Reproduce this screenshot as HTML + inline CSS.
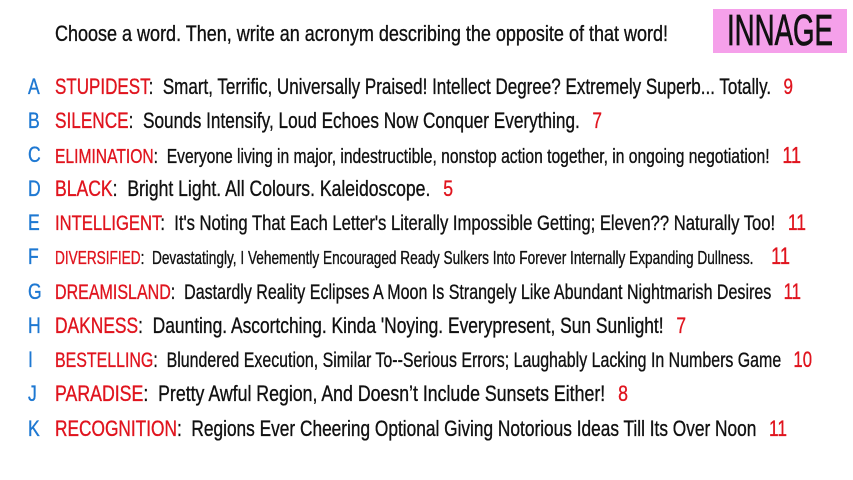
<!DOCTYPE html>
<html><head><meta charset="utf-8">
<style>
html,body{margin:0;padding:0;background:#fff;}
body{width:853px;height:480px;position:relative;overflow:hidden;font-family:"Liberation Sans Narrow","Liberation Sans",sans-serif;color:#111;-webkit-text-stroke:0.35px currentColor;}
.hdr{position:absolute;left:55px;top:21px;font-size:22px;white-space:nowrap;transform-origin:0 50%;}
.box{position:absolute;left:713px;top:9px;width:134px;height:44px;background:#f5a0ea;}
.box span{position:absolute;left:14px;top:0;font-size:44px;line-height:44px;color:#111;white-space:nowrap;transform-origin:0 50%;-webkit-text-stroke:0.8px #111;}
.row{position:absolute;left:0;height:26px;width:853px;}
.L{position:absolute;left:28px;top:0;color:#1e78d2;font-size:22px;line-height:26px;transform:scaleX(0.8);transform-origin:0 50%;}
.c{position:absolute;left:55px;top:0;line-height:26px;white-space:nowrap;transform-origin:0 50%;}
.w{color:#e0141e;}
.n{color:#e0141e;margin-left:10px;}
</style></head><body>
<div class="hdr" data-e="668">Choose a word. Then, write an acronym describing the opposite of that word!</div>
<div class="box"><span data-e="120">INNAGE</span></div>

<div class="row" style="top:74px"><span class="L">A</span><span class="c" data-e="793" style="font-size:22px"><span class="w">STUPIDEST</span>:&nbsp; Smart, Terrific, Universally Praised! Intellect Degree? Extremely Superb... Totally.<span class="n">&nbsp;9</span></span></div>
<div class="row" style="top:108px"><span class="L">B</span><span class="c" data-e="602" style="font-size:22px"><span class="w">SILENCE</span>:&nbsp; Sounds Intensify, Loud Echoes Now Conquer Everything.<span class="n">&nbsp;7</span></span></div>
<div class="row" style="top:142px"><span class="L">C</span><span class="c" data-e="801" style="font-size:20px"><span class="w">ELIMINATION</span>:&nbsp; Everyone living in major, indestructible, nonstop action together, in ongoing negotiation!<span class="n" style="font-size:23px">&nbsp;11</span></span></div>
<div class="row" style="top:176px"><span class="L">D</span><span class="c" data-e="453" style="font-size:22px"><span class="w">BLACK</span>:&nbsp; Bright Light. All Colours. Kaleidoscope.<span class="n">&nbsp;5</span></span></div>
<div class="row" style="top:210px"><span class="L">E</span><span class="c" data-e="806" style="font-size:21px"><span class="w">INTELLIGENT</span>:&nbsp; It's Noting That Each Letter's Literally Impossible Getting; Eleven?? Naturally Too!<span class="n" style="font-size:22px">&nbsp;11</span></span></div>
<div class="row" style="top:244px"><span class="L">F</span><span class="c" data-e="790" style="font-size:18px"><span class="w">DIVERSIFIED</span>:&nbsp; Devastatingly, I Vehemently Encouraged Ready Sulkers Into Forever Internally Expanding Dullness.<span class="n" style="font-size:24px">&nbsp;&nbsp;11</span></span></div>
<div class="row" style="top:279px"><span class="L">G</span><span class="c" data-e="801" style="font-size:21px"><span class="w">DREAMISLAND</span>:&nbsp; Dastardly Reality Eclipses A Moon Is Strangely Like Abundant Nightmarish Desires<span class="n" style="font-size:22px">&nbsp;11</span></span></div>
<div class="row" style="top:313px"><span class="L">H</span><span class="c" data-e="686" style="font-size:22px"><span class="w">DAKNESS</span>:&nbsp; Daunting. Ascortching. Kinda 'Noying. Everypresent, Sun Sunlight!<span class="n">&nbsp;7</span></span></div>
<div class="row" style="top:347px"><span class="L">I</span><span class="c" data-e="812" style="font-size:21px"><span class="w">BESTELLING</span>:&nbsp; Blundered Execution, Similar To--Serious Errors; Laughably Lacking In Numbers Game<span class="n" style="font-size:22px">&nbsp;10</span></span></div>
<div class="row" style="top:381px"><span class="L">J</span><span class="c" data-e="628" style="font-size:22px"><span class="w">PARADISE</span>:&nbsp; Pretty Awful Region, And Doesn’t Include Sunsets Either!<span class="n">&nbsp;8</span></span></div>
<div class="row" style="top:416px"><span class="L">K</span><span class="c" data-e="787" style="font-size:22px"><span class="w">RECOGNITION</span>:&nbsp; Regions Ever Cheering Optional Giving Notorious Ideas Till Its Over Noon<span class="n">&nbsp;11</span></span></div>

<script>
document.querySelectorAll('[data-e]').forEach(function(el){
  var end=parseFloat(el.getAttribute('data-e'));
  var target=end-el.offsetLeft;
  var w=el.getBoundingClientRect().width;
  if(w>0){el.style.transform='scaleX('+(target/w)+')';}
});
</script>
</body></html>
